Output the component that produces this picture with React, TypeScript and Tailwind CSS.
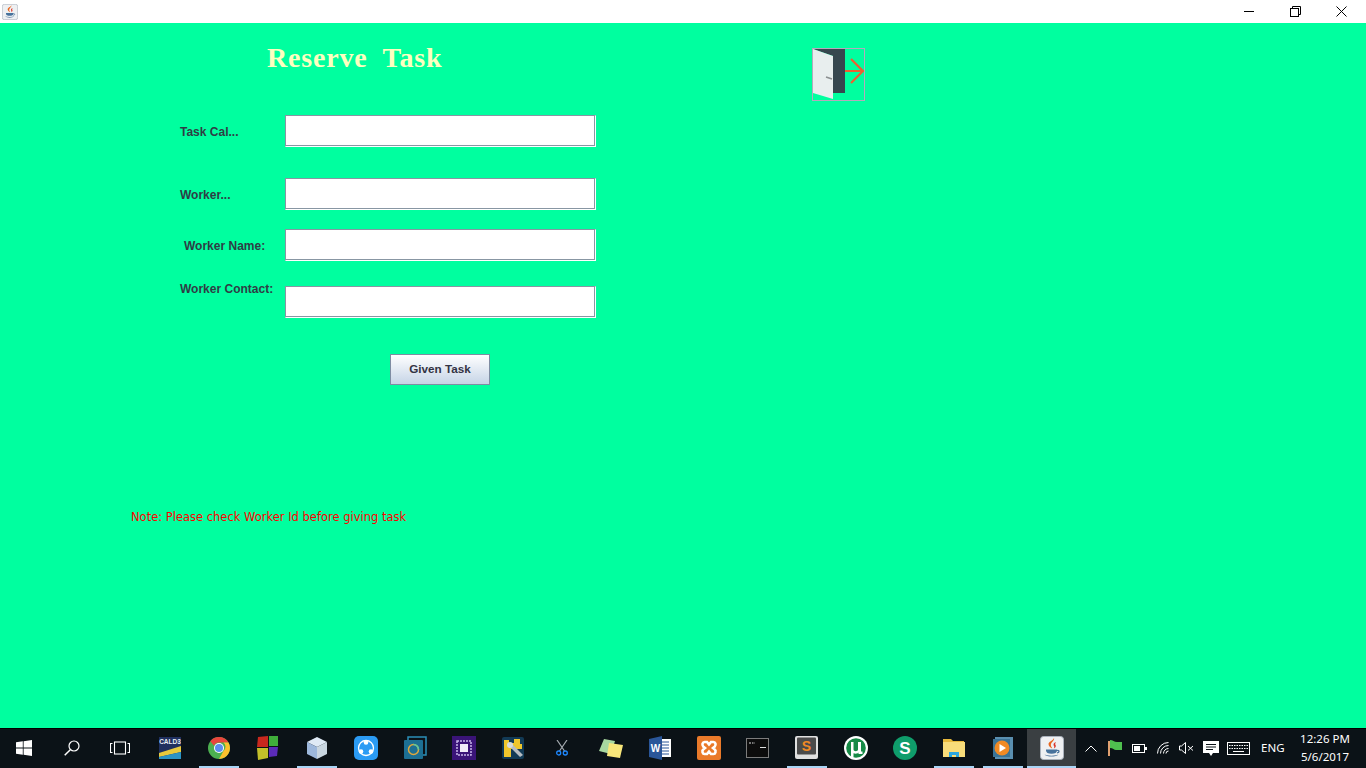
import type { ReactNode } from "react";

const JavaIcon = ({ size }: { size: number }) => (
    <svg width={size} height={size} viewBox="0 0 24 24">
        <rect x="0.5" y="0.5" width="23" height="23" rx="3" fill="#eef0f2" stroke="#aab2bc" />
        <path d="M14 2c1 3-4 4-3 8 .3 1 1 1.500 1.200 2.500C10.500 11.500 8.500 10 8.500 8 8.500 5.500 13 5 14 2z" fill="#e8661d" />
        <path d="M16 6c-2.500 1-3 2.500-2 4 .4.700.4 1.500-.2 2.500 2-1 2.500-2.200 1.600-3.700-.5-.8 0-1.700.6-2.800z" fill="#d9372b" />
        <path d="M6 13.500h11v1c0 2-2 3.300-5.500 3.300S6 16.500 6 14.500z" fill="#47729c" />
        <path d="M17 14.500c2.500-.5 3 1.800 0 2.500" fill="none" stroke="#47729c" strokeWidth="1.200" />
        <path d="M4.500 18.500c4 1.500 10 1.500 14 0-2.500 2.700-11.500 2.700-14 0z" fill="#5b7fa3" />
    </svg>
);

const WindowsLogo = () => (
    <svg width="16" height="16" viewBox="0 0 16 16" fill="#fff">
        <path d="M0 2.300 6.800 1.300V7.600H0zM7.600 1.200 16 0V7.600H7.600zM0 8.400H6.800V14.700L0 13.700zM7.600 8.400H16V16L7.600 14.800z" />
    </svg>
);

const SearchIcon = () => (
    <svg width="16" height="16" viewBox="0 0 16 16" fill="none" stroke="#fff" strokeWidth="1.200">
        <circle cx="10" cy="6" r="5" />
        <path d="M6.300 9.700 .7 15.300" strokeWidth="1.500" />
    </svg>
);

const TaskView = () => (
    <svg width="20" height="14" viewBox="0 0 20 14" fill="none" stroke="#fff" strokeWidth="1.100">
        <rect x="4.500" y="1" width="11" height="12" />
        <path d="M2.500 2.500H.5v9h2M17.500 2.500h2v9h-2" />
    </svg>
);

const Cald3 = () => (
    <svg width="22" height="22" viewBox="0 0 22 22">
        <rect width="22" height="22" fill="#20305f" />
        <path d="M0 16 22 9v6L0 20z" fill="#e8c93c" />
        <path d="M0 20 22 15v7H0z" fill="#2b93c5" />
        <text x="11" y="7" textAnchor="middle" fontSize="6.500" fontWeight="700" fill="#e8eef5" fontFamily="'Liberation Sans', sans-serif">CALD3</text>
    </svg>
);

const Chrome = () => (
    <svg width="22" height="22" viewBox="0 0 22 22">
        <circle cx="11" cy="11" r="11" fill="#4caf50" />
        <path d="M11 0a11 11 0 0 1 9.500 5.500H11a5.500 5.500 0 0 0-5 3.200L2.300 4.200A11 11 0 0 1 11 0z" fill="#e8453c" />
        <path d="M20.500 5.500A11 11 0 0 1 11 22l4.500-8a5.500 5.500 0 0 0 0-8.500z" fill="#fbc02d" />
        <circle cx="11" cy="11" r="5" fill="#fff" />
        <circle cx="11" cy="11" r="4" fill="#5b8def" />
    </svg>
);

const Squares = () => (
    <svg width="22" height="24" viewBox="0 0 22 24">
        <path d="M1 1 11 0v11H0z" fill="#c8281e" />
        <path d="M12 0h9v10h-9z" fill="#3fae3a" />
        <path d="M0 12h11v10L1 24z" fill="#c4c02a" />
        <path d="M12 11h9l-1 9-8 1z" fill="#5b2bb8" />
    </svg>
);

const Cube = () => (
    <svg width="22" height="24" viewBox="0 0 22 24">
        <path d="M11 1 21 6 11 11 1 6z" fill="#dfeaf5" />
        <path d="M1 6 11 11V23L1 18z" fill="#9db8dc" />
        <path d="M21 6 11 11V23L21 18z" fill="#c9d6e0" />
    </svg>
);

const ShareIt = () => (
    <svg width="24" height="24" viewBox="0 0 24 24">
        <rect width="24" height="24" rx="5" fill="#2b9bf4" />
        <circle cx="12" cy="12" r="7.500" fill="none" stroke="#fff" strokeWidth="1.300" />
        <circle cx="12" cy="6.500" r="2.300" fill="#fff" />
        <circle cx="7" cy="15.500" r="2.300" fill="#fff" />
        <circle cx="17" cy="15.500" r="2.300" fill="#fff" />
    </svg>
);

const Camtasia = () => (
    <svg width="24" height="24" viewBox="0 0 24 24">
        <rect x="5" y="1" width="18" height="18" fill="none" stroke="#2b8fb8" strokeWidth="1.500" />
        <rect x="1" y="4" width="19" height="19" rx="1" fill="#1d6f93" />
        <circle cx="10.500" cy="13.500" r="5" fill="none" stroke="#e0a83c" strokeWidth="1.500" />
        <path d="M10.500 8.500a5 5 0 0 1 5 5" fill="none" stroke="#58c7a0" strokeWidth="1.500" />
    </svg>
);

const Chip = () => (
    <svg width="24" height="24" viewBox="0 0 24 24">
        <rect width="24" height="24" fill="#3a1478" />
        <rect x="5" y="5" width="14" height="14" fill="none" stroke="#c9b6ea" strokeWidth="1.500" strokeDasharray="2 1" />
        <rect x="8" y="8" width="8" height="8" fill="#f0ecf8" />
    </svg>
);

const Tools = () => (
    <svg width="22" height="22" viewBox="0 0 22 22">
        <rect width="22" height="22" rx="2" fill="#123a55" />
        <path d="M2 3h5v3h5V2h6v5h2v5H9v8H2z" fill="#f0c62c" />
        <path d="M7 9 18 20l3-2L10 7z" fill="#b6bcc2" />
        <circle cx="8" cy="8" r="3" fill="#d6dade" />
    </svg>
);

const Scissors = () => (
    <svg width="12" height="16" viewBox="0 0 12 16" fill="none">
        <path d="M1 0 8.500 11M11 0 3.500 11" stroke="#a5abb0" strokeWidth="1.200" />
        <circle cx="2.700" cy="13" r="2" stroke="#1e88ff" strokeWidth="1.300" />
        <circle cx="9.300" cy="13" r="2" stroke="#1e88ff" strokeWidth="1.300" />
    </svg>
);

const Notes = () => (
    <svg width="24" height="20" viewBox="0 0 24 20">
        <path d="M5 1 16 3 12 16 0 13z" fill="#a8d8a0" />
        <path d="M10 5 24 7 21 20 8 18z" fill="#f8e67a" />
    </svg>
);

const Word = () => (
    <svg width="22" height="24" viewBox="0 0 22 24">
        <rect x="10" y="3" width="12" height="18" fill="#fff" />
        <path d="M12 6h8M12 9h8M12 12h8M12 15h8M12 18h8" stroke="#2a5699" />
        <path d="M0 3 13 0V24L0 21z" fill="#2a5699" />
        <text x="6.500" y="16" textAnchor="middle" fontSize="10" fontWeight="700" fill="#fff" fontFamily="'Liberation Sans', sans-serif">W</text>
    </svg>
);

const Xampp = () => (
    <svg width="24" height="24" viewBox="0 0 24 24">
        <rect width="24" height="24" rx="2" fill="#ea7a2a" />
        <path d="M7.500 6h2.500l2 2.500L14 6h2.500c2 0 2.800 3 1.300 4.500L16 12l1.800 1.500c1.500 1.500.7 4.500-1.300 4.500H14l-2-2.500L10 18H7.500c-2 0-2.800-3-1.300-4.500L8 12l-1.800-1.500C4.700 9 5.500 6 7.500 6z" fill="none" stroke="#fff" strokeWidth="2.600" />
    </svg>
);

const Cmd = () => (
    <svg width="23" height="20" viewBox="0 0 23 20">
        <rect width="23" height="20" fill="#0c0c0c" />
        <rect x="0.500" y="0.500" width="22" height="19" fill="none" stroke="#7c7c7c" />
        <path d="M3 5h2M6 5h1M7.500 5h1M14 9.500h6" stroke="#e0e0e0" strokeWidth="1.200" />
    </svg>
);

const Sublime = () => (
    <svg width="23" height="23" viewBox="0 0 23 23">
        <rect width="23" height="23" rx="2" fill="#e0e0e0" />
        <rect x="2" y="1.500" width="19" height="17" rx="1" fill="#4b4b4b" />
        <text x="11.500" y="15" textAnchor="middle" fontSize="14" fontWeight="700" fill="#f08a24" fontFamily="'Liberation Sans', sans-serif">S</text>
    </svg>
);

const UTorrent = () => (
    <svg width="24" height="24" viewBox="0 0 24 24">
        <circle cx="12" cy="12" r="12" fill="#fff" />
        <circle cx="12" cy="12" r="9.800" fill="#168a46" />
        <path d="M7 6h2.500v7.500c0 2.300 4.500 2.300 4.500 0V6h3v9.500h1.500V18H14.500v-1.500c-1 1.300-3 1.500-5 .8V22H7z" fill="#fff" />
    </svg>
);

const GreenS = () => (
    <svg width="24" height="24" viewBox="0 0 24 24">
        <circle cx="12" cy="12" r="12" fill="#0f9d6b" />
        <text x="12" y="18" textAnchor="middle" fontSize="17" fontWeight="700" fill="#fff" fontFamily="'Liberation Sans', sans-serif">S</text>
    </svg>
);

const Explorer = () => (
    <svg width="22" height="20" viewBox="0 0 22 20">
        <path d="M0 1h8l2 2h11v4H0z" fill="#e8b93c" />
        <rect y="4" width="22" height="15" fill="#f8dc7a" />
        <path d="M6 19v-5h10v5h-3v-2H9v2z" fill="#2ba6e0" />
    </svg>
);

const MediaPlayer = () => (
    <svg width="20" height="22" viewBox="0 0 20 22">
        <rect x="2" y="0" width="18" height="22" fill="#5a8fb0" />
        <rect y="2" width="17" height="18" fill="#3a7396" />
        <circle cx="9" cy="11" r="7.500" fill="#f08a24" />
        <path d="M6.500 7 13 11l-6.500 4z" fill="#fff" />
    </svg>
);

const apps: { icon: ReactNode; open?: boolean; active?: boolean }[] = [
    { icon: <Cald3 /> },
    { icon: <Chrome />, open: true },
    { icon: <Squares /> },
    { icon: <Cube />, open: true },
    { icon: <ShareIt /> },
    { icon: <Camtasia /> },
    { icon: <Chip /> },
    { icon: <Tools /> },
    { icon: <Scissors /> },
    { icon: <Notes /> },
    { icon: <Word /> },
    { icon: <Xampp /> },
    { icon: <Cmd /> },
    { icon: <Sublime />, open: true },
    { icon: <UTorrent /> },
    { icon: <GreenS /> },
    { icon: <Explorer />, open: true },
    { icon: <MediaPlayer />, open: true },
    { icon: <JavaIcon size={24} />, open: true, active: true },
];

function FormRow({ label, labelClass, className }: { label: string; labelClass?: string; className?: string }) {
    return (
        <div className={`flex items-center ${className ?? ""}`}>
            <label className={`w-[105px] shrink-0 text-[12px] font-bold leading-none text-[#2f3d45] ${labelClass ?? "pt-[2px]"}`}>
                {label}
            </label>
            <input className="h-[32px] w-[311px] border border-t-[#8896a3] border-l-[#8896a3] border-r-white border-b-white bg-white shadow-[inset_-1px_-1px_0_#8896a3]" />
        </div>
    );
}

export default function App() {
    return (
        <div className="flex h-[768px] w-[1366px] flex-col overflow-hidden bg-[#00ff9f] font-['Liberation_Sans',sans-serif]">
            <div className="flex h-[23px] shrink-0 items-center justify-between bg-white pl-[2px] pr-[2px]">
                <JavaIcon size={16} />
                <div className="flex items-center">
                    <div className="flex h-[23px] w-[46px] items-center justify-center">
                        <div className="h-px w-[10px] bg-black" />
                    </div>
                    <div className="flex h-[23px] w-[46px] items-center justify-center">
                        <svg width="11" height="11" viewBox="0 0 11 11" fill="none" stroke="#000">
                            <rect x="0.500" y="2.500" width="8" height="8" />
                            <path d="M2.500 2.500v-2h8v8h-2" />
                        </svg>
                    </div>
                    <div className="flex h-[23px] w-[46px] items-center justify-center">
                        <svg width="11" height="11" viewBox="0 0 11 11" fill="none" stroke="#000">
                            <path d="M.5.500l10 10M10.500.500l-10 10" />
                        </svg>
                    </div>
                </div>
            </div>

            <main className="flex-1">
                <div className="flex items-start pt-[25px]">
                    <h1 className="ml-[267px] w-[545px] font-['Liberation_Serif',serif] text-[28px] font-bold leading-[20px] tracking-[0.8px] whitespace-pre text-[#fdffc0]">
                        {"Reserve  Task"}
                    </h1>
                    <svg width="53" height="53" viewBox="0 0 51 51" className="border border-[#b5a9bd]">
                        <path d="M0 0H32V44H20V7z" fill="#37474f" />
                        <path d="M0 0 20 7V50L0 44z" fill="#e8eeee" />
                        <path d="M13 28l6 2" stroke="#8b8f90" strokeWidth="1.500" />
                        <path d="M32 22H50M38 10 50 22 38 34" fill="none" stroke="#ee6030" strokeWidth="2.200" />
                    </svg>
                </div>

                <div className="ml-[180px] mt-[14px] flex flex-col">
                    <FormRow label="Task Cal..." />
                    <FormRow label="Worker..." className="mt-[31px]" />
                    <FormRow label="Worker Name:" labelClass="pl-1 pt-[2px]" className="mt-[19px]" />
                    <FormRow label="Worker Contact:" labelClass="self-start -mt-[3px]" className="mt-[25px]" />
                </div>

                <button className="ml-[390px] mt-[36px] block h-[31px] w-[100px] border border-[#7f8ca3] bg-gradient-to-b from-white to-[#c6d4e6] pb-px text-[11.700px] font-bold text-[#333344]">
                    Given Task
                </button>

                <p className="ml-[131px] mt-[124px] font-['DejaVu_Sans',sans-serif] text-[11.500px] leading-[16px] text-[#ff0000]">
                    Note: Please check Worker Id before giving task
                </p>
            </main>

            <footer className="flex h-[40px] shrink-0 items-center border-t border-black bg-[#0b1217] text-white">
                <div className="flex h-full w-[48px] shrink-0 items-center justify-center pb-px"><WindowsLogo /></div>
                <div className="flex h-full w-[48px] shrink-0 items-center justify-center pb-px"><SearchIcon /></div>
                <div className="flex h-full w-[48px] shrink-0 items-center justify-center pb-px"><TaskView /></div>
                <div className="ml-px flex h-full shrink-0">
                    {apps.map((app, i) => (
                        <div key={i} className={`relative flex h-full w-[49px] shrink-0 items-center justify-center pb-[2px] ${app.active ? "bg-[#3a3f42]" : ""}`}>
                            {app.icon}
                            {app.open && <div className={`absolute bottom-0 h-[2px] bg-[#a8d4f5] ${app.active ? "left-0 right-0" : "left-[5px] right-[4px]"}`} />}
                        </div>
                    ))}
                </div>

                <div className="ml-[9px] flex h-full shrink-0 items-center pb-px">
                    <svg width="12" height="7" viewBox="0 0 12 7" fill="none" stroke="#fff" className="mr-[10px]">
                        <path d="M.5 6.500 6 1l5.500 5.500" />
                    </svg>
                    <svg width="16" height="18" viewBox="0 0 16 18" className="mr-[9px]">
                        <path d="M1 2h2v15H1z" fill="#e0a070" />
                        <path d="M3 1c3 0 4 2 7 2h5v8h-6c-2 0-3-2-6-2z" fill="#4fc04f" />
                    </svg>
                    <svg width="15" height="9" viewBox="0 0 15 9" className="mr-[10px]">
                        <rect x="0.500" y="0.500" width="12" height="8" fill="none" stroke="#fff" />
                        <rect x="2" y="2" width="6" height="5" fill="#fff" />
                        <rect x="13" y="3" width="2" height="3" fill="#fff" />
                    </svg>
                    <svg width="14" height="12" viewBox="0 0 14 12" fill="none" stroke="#fff" className="mr-[8px]">
                        <path d="M.5 11.500A11 11 0 0 1 11.500.5M3.500 11.500a8 8 0 0 1 8-8M6.500 11.500a5 5 0 0 1 5-5M9 11.500a2.500 2.500 0 0 1 2.500-2.500" />
                    </svg>
                    <svg width="15" height="12" viewBox="0 0 15 12" fill="none" stroke="#fff" className="mr-[9px]">
                        <path d="M.5 4v4h2l4 3.500V.5l-4 3.500zM9 4l5 4.500M14 4 9 8.500" />
                    </svg>
                    <svg width="16" height="15" viewBox="0 0 16 15" className="mr-[8px]">
                        <path d="M0 0h16v12h-6l-2 3-2-3H0z" fill="#fff" />
                        <path d="M3 3.500h10M3 6h10M3 8.500h7" stroke="#0b1217" />
                    </svg>
                    <svg width="23" height="13" viewBox="0 0 23 13" fill="none" stroke="#fff" className="mr-[11px]">
                        <rect x="0.500" y="0.500" width="22" height="12" />
                        <path d="M2 3.500h19M2 6.500h19" strokeDasharray="1.500 1" />
                        <path d="M6 9.500h11" />
                    </svg>
                    <span className="w-[32px] font-['Noto_Sans',sans-serif] text-[11.500px]">ENG</span>
                    <div className="ml-[2px] w-[60px] text-center font-['Noto_Sans',sans-serif] text-[11.500px] leading-[18px]">
                        <div>12:26 PM</div>
                        <div>5/6/2017</div>
                    </div>
                </div>
            </footer>
        </div>
    );
}
